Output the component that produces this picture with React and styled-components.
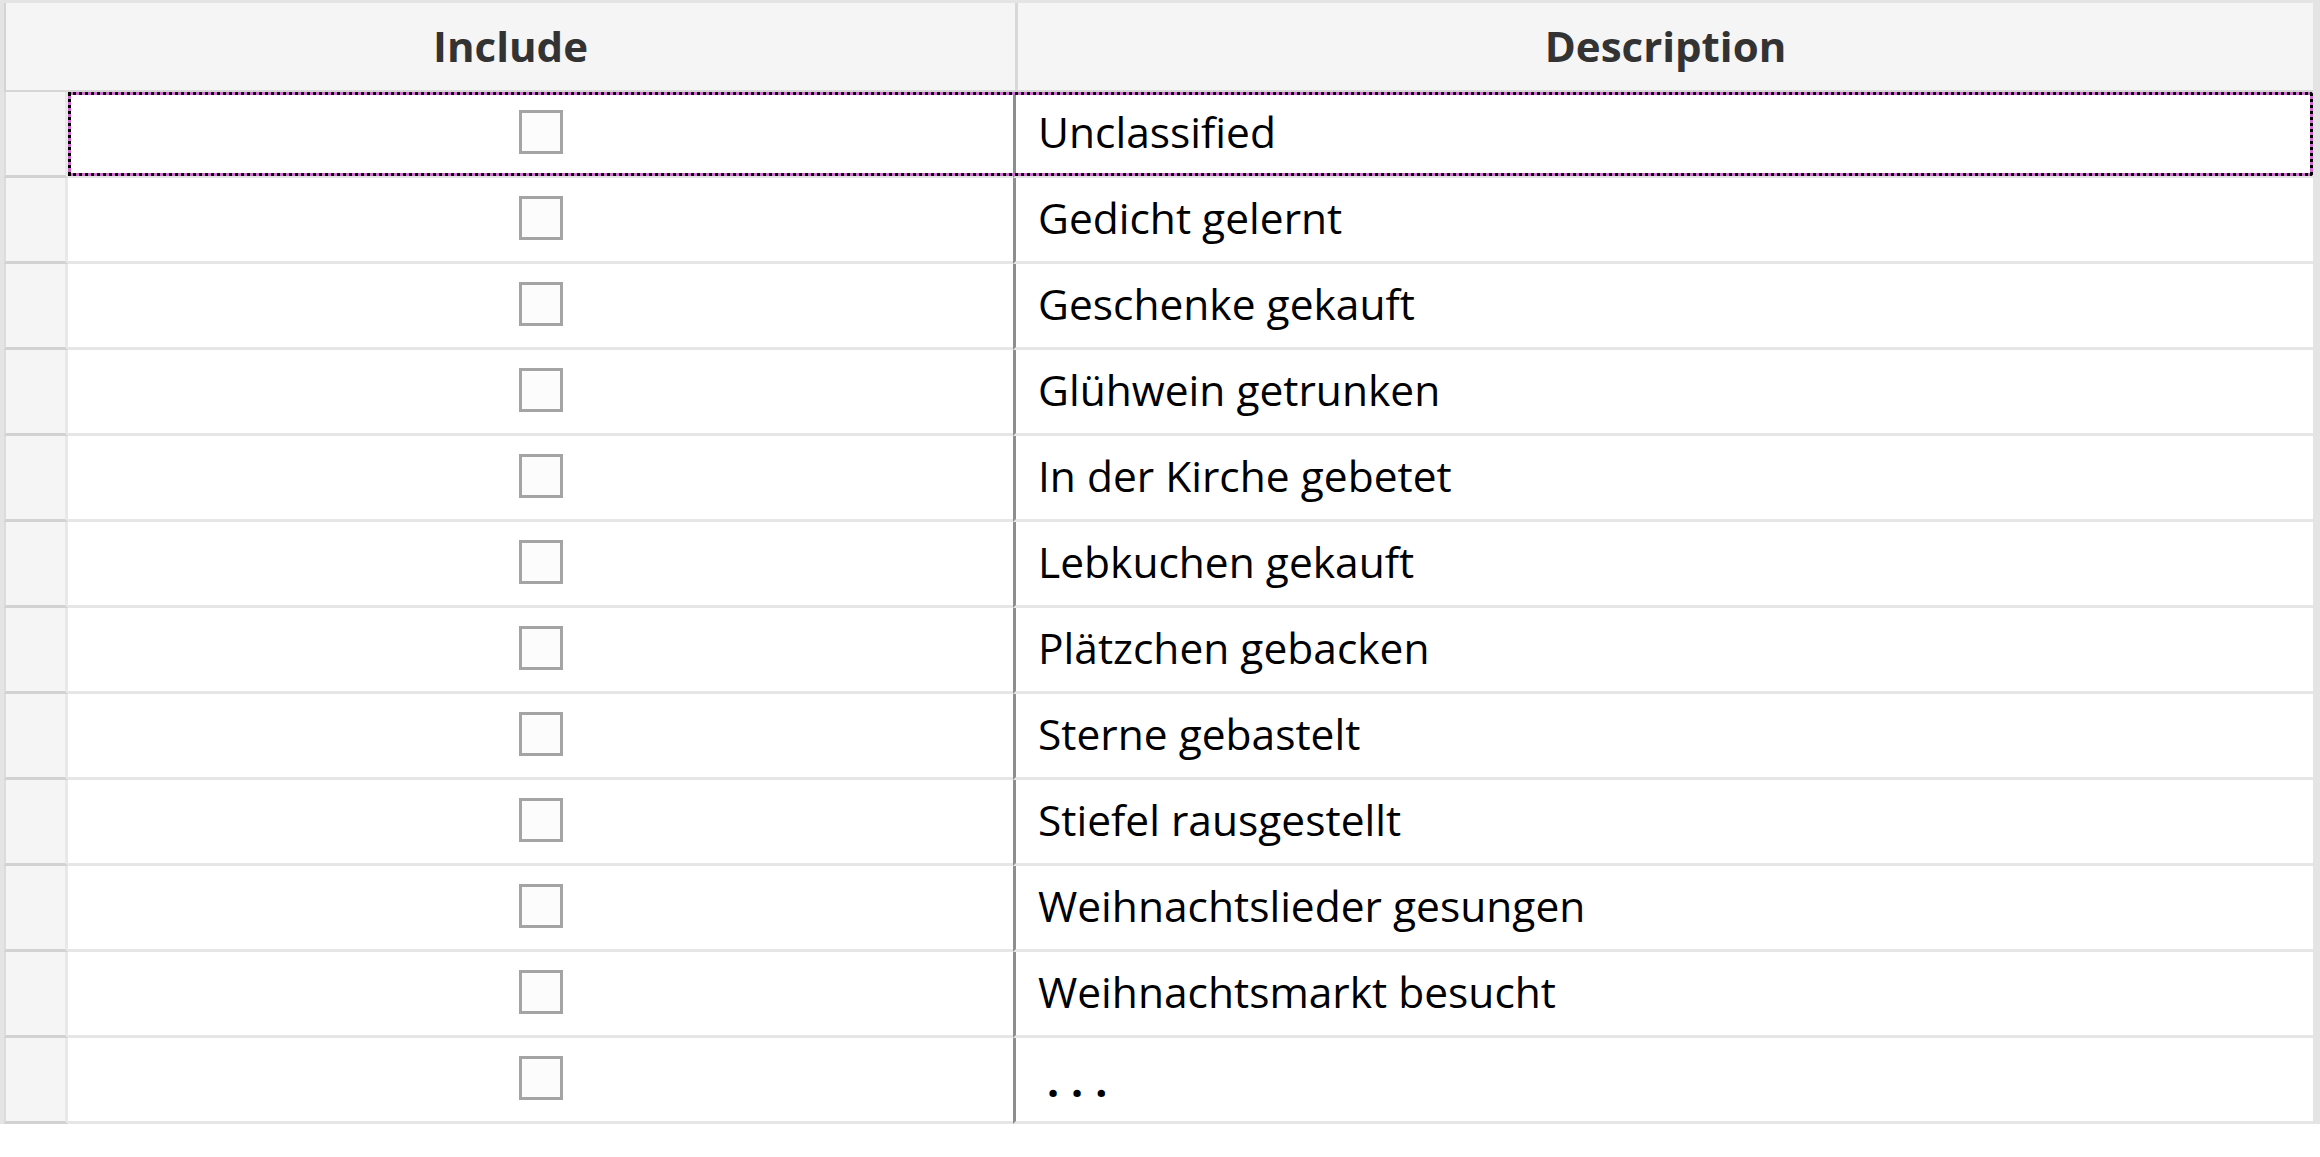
import React from 'react';
import styled, { createGlobalStyle } from 'styled-components';

const items = [
    'Unclassified',
    'Gedicht gelernt',
    'Geschenke gekauft',
    'Glühwein getrunken',
    'In der Kirche gebetet',
    'Lebkuchen gekauft',
    'Plätzchen gebacken',
    'Sterne gebastelt',
    'Stiefel rausgestellt',
    'Weihnachtslieder gesungen',
    'Weihnachtsmarkt besucht',
];

export default () => {
    return (
        <>
            <GlobalStyle />
            <Grid>
                <HeaderRow>
                    <HeaderCell>Include</HeaderCell>
                    <HeaderCell divider>Description</HeaderCell>
                </HeaderRow>
                {items.map((text, i) => (
                    <Row key={i}>
                        <RowHeader />
                        <CheckCell>
                            <CheckBox />
                        </CheckCell>
                        <TextCell>{text}</TextCell>
                        {i === 0 && <FocusRect />}
                    </Row>
                ))}
                <Row>
                    <RowHeader />
                    <CheckCell>
                        <CheckBox />
                    </CheckCell>
                    <TextCell>
                        <More>...</More>
                    </TextCell>
                </Row>
            </Grid>
        </>
    );
};

const GlobalStyle = createGlobalStyle`
    html, body {
        margin: 0;
        padding: 0;
        background: #ffffff;
    }
    body {
        font-family: 'Open Sans', 'Noto Sans', sans-serif;
    }
`;

const Grid = styled.div`
    width: 2320px;
    box-sizing: border-box;
    border-top: 3px solid #e4e4e4;
    border-left: 4px solid #e4e4e4;
    border-right: 7px solid #e4e4e4;
    display: flex;
    flex-direction: column;
`;

const HeaderRow = styled.div`
    display: grid;
    grid-template-columns: 1009px 1fr;
    height: 89px;
    box-sizing: border-box;
    background: #f5f5f5;
    border-left: 2px solid #d4d4d4;
    border-bottom: 2px solid #d6d6d6;
`;

const HeaderCell = styled.div`
    display: flex;
    align-items: center;
    justify-content: center;
    font-size: 42px;
    font-weight: 700;
    color: #333333;
    padding-bottom: 2px;
    ${({ divider }) => divider && `border-left: 3px solid #d8d8d8;`}
`;

const Row = styled.div`
    position: relative;
    display: grid;
    grid-template-columns: 64px 945px 1fr;
    height: 86px;
`;

const RowHeader = styled.div`
    background: #f5f5f5;
    border-left: 2px solid #dcdcdc;
    border-right: 3px solid #e8e8e8;
    border-bottom: 3px solid #d2d2d2;
`;

const CheckCell = styled.div`
    display: flex;
    align-items: center;
    justify-content: center;
    padding-bottom: 4px;
    border-bottom: 3px solid #e6e6e6;
`;

const CheckBox = styled.div`
    width: 44px;
    height: 44px;
    box-sizing: border-box;
    border: 3px solid #a4a4a4;
    background: #fcfcfc;
`;

const TextCell = styled.div`
    display: flex;
    align-items: center;
    padding-left: 22px;
    padding-bottom: 4px;
    border-left: 3px solid #8e8e8e;
    border-bottom: 3px solid #e6e6e6;
    font-size: 42.5px;
    color: #000000;
    white-space: nowrap;
`;

const More = styled.span`
    margin-left: 9px;
    margin-top: 6px;
    letter-spacing: 12px;
    font-weight: 700;
`;

const FocusRect = styled.div`
    position: absolute;
    left: 64px;
    right: 0;
    top: 0;
    bottom: 2px;
    border: 3px solid #d36ad3;
    border-radius: 0 3px 3px 0;
    pointer-events: none;

    &::after {
        content: '';
        position: absolute;
        inset: -3px;
        border: 3px dotted #000000;
        border-radius: 0 3px 3px 0;
    }
`;
